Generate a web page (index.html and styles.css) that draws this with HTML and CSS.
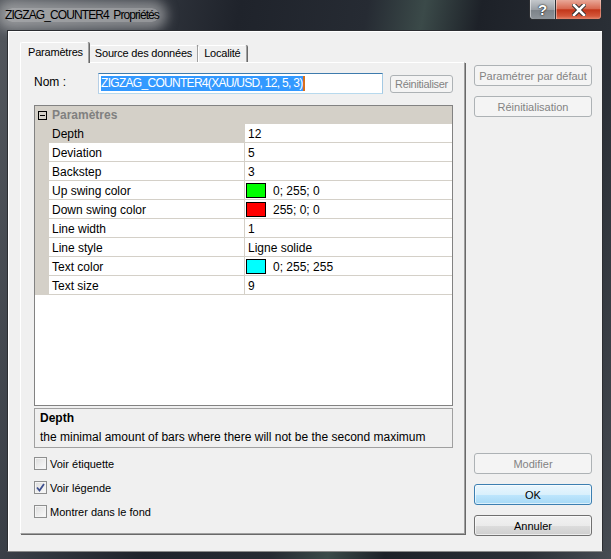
FILE: index.html
```html
<!DOCTYPE html>
<html lang="fr">
<head>
    <meta charset="UTF-8">
    <meta name="viewport" content="width=device-width, initial-scale=1.0">
    <title>ZIGZAG_COUNTER4 Propriétés</title>
    <link rel="stylesheet" href="styles.css">
</head>
<body>

    <div class="window">
        <div class="titlebar">
            <span class="title">ZIGZAG_COUNTER4 Propriétés</span>
            <div class="caption-buttons">
                <span class="cap help">?</span>
                <span class="cap close">
                    <svg width="14" height="12" viewBox="0 0 14 12">
                        <path d="M2 1 L12 11 M12 1 L2 11" stroke="#2a2a2a" stroke-width="4.5" stroke-linecap="square"/>
                        <path d="M2 1 L12 11 M12 1 L2 11" stroke="#fff" stroke-width="2.6" stroke-linecap="square"/>
                    </svg>
                </span>
            </div>
        </div>

        <div class="client">
            <div class="left">
                <div class="tabs">
                    <span class="tab active">Paramètres</span>
                    <span class="tab">Source des données</span>
                    <span class="tab">Localité</span>
                </div>

                <div class="panel">
                    <div class="name-row">
                        <label class="name-label">Nom :</label>
                        <div class="textbox"><span class="selected-text">ZIGZAG_COUNTER4(XAU/USD, 12, 5, 3)</span><span class="caret"></span></div>
                        <button class="btn small" disabled>Réinitialiser</button>
                    </div>

                    <div class="grid">
                        <div class="category"><span class="minus"></span>Paramètres</div>
                        <div class="row selected"><div class="gutter"></div><div class="name">Depth</div><div class="value">12</div></div>
                        <div class="row"><div class="gutter"></div><div class="name">Deviation</div><div class="value">5</div></div>
                        <div class="row"><div class="gutter"></div><div class="name">Backstep</div><div class="value">3</div></div>
                        <div class="row"><div class="gutter"></div><div class="name">Up swing color</div><div class="value"><span class="swatch" style="background:#00ff00"></span>0; 255; 0</div></div>
                        <div class="row"><div class="gutter"></div><div class="name">Down swing color</div><div class="value"><span class="swatch" style="background:#ff0000"></span>255; 0; 0</div></div>
                        <div class="row"><div class="gutter"></div><div class="name">Line width</div><div class="value">1</div></div>
                        <div class="row"><div class="gutter"></div><div class="name">Line style</div><div class="value">Ligne solide</div></div>
                        <div class="row"><div class="gutter"></div><div class="name">Text color</div><div class="value"><span class="swatch" style="background:#00ffff"></span>0; 255; 255</div></div>
                        <div class="row"><div class="gutter"></div><div class="name">Text size</div><div class="value">9</div></div>
                    </div>

                    <div class="desc">
                        <div class="desc-title">Depth</div>
                        <div>the minimal amount of bars where there will not be the second maximum</div>
                    </div>

                    <div class="checks">
                        <div class="check"><span class="box"></span>Voir étiquette</div>
                        <div class="check"><span class="box checked">
                            <svg width="9" height="9" viewBox="0 0 9 9"><path d="M1 4.5 L3.5 7.5 L8 1" fill="none" stroke="#3d4f8f" stroke-width="1.8"/></svg>
                        </span>Voir légende</div>
                        <div class="check"><span class="box"></span>Montrer dans le fond</div>
                    </div>
                </div>
            </div>

            <div class="right">
                <div class="right-top">
                    <button class="btn" disabled>Paramétrer par défaut</button>
                    <button class="btn" disabled>Réinitialisation</button>
                </div>
                <div class="right-bottom">
                    <button class="btn" disabled>Modifier</button>
                    <button class="btn default">OK</button>
                    <button class="btn normal">Annuler</button>
                </div>
            </div>
        </div>
    </div>

</body>
</html>
```

FILE: styles.css
```css
body { margin: 0; font-family: "Liberation Sans", Arial, sans-serif; font-size: 11px; color: #000; }

/* window frame */
.window {
    width: 611px; height: 559px; box-sizing: border-box; display: flex; flex-direction: column;
    background: linear-gradient(100deg, #54585e 0%, #3a3f47 14%, #1f232b 34%, #262b33 52%, #3b4a49 60%, #1d2128 68%, #2b3037 88%, #474c53 100%);
}
.titlebar { height: 30px; display: flex; align-items: flex-start; flex-shrink: 0; }
.title {
    margin: 8px 0 0 5px; font-size: 12px; line-height: 14px; letter-spacing: -0.9px; word-spacing: 2px;
    background: rgba(215, 215, 215, 0.6); box-shadow: 0 0 12px 8px rgba(215, 215, 215, 0.5); border-radius: 8px;
}
.caption-buttons { margin-left: auto; margin-right: 9px; display: flex; }
.cap {
    height: 20px; box-sizing: border-box; display: flex; align-items: center; justify-content: center;
    border: 1px solid #2d2f33; border-top: none;
}
.help {
    width: 26px; border-radius: 0 0 0 4px; border-right: none;
    background: linear-gradient(#c4c8cc, #9ba0a6 50%, #7c8288 51%, #8d9399);
    color: #fff; font: bold 15px "Liberation Sans", sans-serif; text-shadow: 0 0 2px #222, 0 0 1px #000;
    box-shadow: inset 1px 0 rgba(255,255,255,0.5), inset -1px 0 rgba(255,255,255,0.3);
}
.close {
    width: 47px; border-radius: 0 0 4px 0;
    background: linear-gradient(#e9a898, #d86a52 45%, #c2361a 52%, #d4573a 85%, #e3866c);
    box-shadow: inset 1px 0 rgba(255,255,255,0.4), inset -1px 0 rgba(255,255,255,0.3);
}

/* client area */
.client {
    margin: 0 8px 7px 7px; height: 522px; box-sizing: border-box; display: flex; gap: 9px;
    border: 1px solid #2b2d31; border-bottom-color: #8a8a8a; background: #f0f0f0; padding: 11px 10px 17px 12px;
    box-shadow: inset 1px 1px #fff;
}
.left { width: 445px; display: flex; flex-direction: column; }

.tabs { display: flex; height: 20px; align-items: flex-end; }
.tab {
    height: 17px; box-sizing: border-box; padding: 0 5px; line-height: 15px; background: #f0f0f0;
    border: 1px solid #fff; border-bottom: none; border-right-color: #a0a0a0;
    box-shadow: 1px 0 #696969; border-radius: 2px 2px 0 0; letter-spacing: -0.2px;
}
.tab.active { height: 21px; margin-bottom: -1px; position: relative; z-index: 1; padding: 0 5px 0 7px; line-height: 19px; }

.panel {
    flex: 1; box-sizing: border-box; border: 1px solid #fff; border-right-color: #a0a0a0; border-bottom-color: #a0a0a0;
    box-shadow: 1px 1px #696969; padding: 10px 11px 0 13px; display: flex; flex-direction: column;
}

.name-row { display: flex; align-items: center; height: 21px; }
.name-label { width: 64px; font-size: 12px; margin-top: -4px; }
.textbox {
    width: 285px; height: 21px; box-sizing: border-box; background: #fff; display: flex; align-items: center; padding-left: 2px;
    border: 1px solid; border-color: #3d7bad #a4c9e3 #b7d9ed #b5cfe7; font-size: 12px; letter-spacing: -0.7px;
}
.selected-text { background: #3399ff; color: #fff; line-height: 15px; }
.caret { width: 2px; height: 15px; background: #d9701c; }

.btn {
    width: 118px; height: 21px; box-sizing: border-box; border: 1px solid #adb2b5; border-radius: 3px;
    background: #f4f4f4; color: #838383; font: 11px "Liberation Sans", Arial, sans-serif; padding: 0;
}
.btn.small { width: 63px; height: 18px; margin-left: 7px; letter-spacing: -0.3px; }
.btn.default {
    border-color: #3c7fb1; color: #000;
    background: linear-gradient(#eaf6fd, #d9f0fc 50%, #bee6fd 51%, #a7d9f5);
    box-shadow: inset 0 0 0 1px rgba(255,255,255,0.6);
}
.btn.normal {
    border-color: #707070; color: #000;
    background: linear-gradient(#f2f2f2, #ebebeb 50%, #dddddd 51%, #cfcfcf);
    box-shadow: inset 0 0 0 1px rgba(255,255,255,0.6);
}

/* property grid */
.grid { margin-top: 11px; height: 301px; box-sizing: border-box; border: 1px solid #828282; background: #fff; font-size: 12px; }
.category { height: 18px; display: flex; align-items: center; background: #d4d0c8; color: #808080; font-weight: bold; }
.minus { width: 9px; height: 9px; box-sizing: border-box; border: 1px solid #000; margin: 0 5px 0 3px; position: relative; }
.minus::after { content: ""; position: absolute; left: 1px; right: 1px; top: 3px; height: 1px; background: #000; }
.row { display: flex; height: 19px; }
.gutter { width: 14px; background: #d4d0c8; }
.name, .value { box-sizing: border-box; border-bottom: 1px solid #d4d0c8; line-height: 18px; display: flex; align-items: center; padding-top: 1px; }
.name { width: 196px; padding-left: 3px; border-right: 1px solid #d4d0c8; }
.value { flex: 1; padding-left: 3px; }
.row.selected .name { background: #d4d0c8; }
.swatch { width: 20px; height: 15px; box-sizing: border-box; border: 1px solid #000; margin: -1px 7px 0 -2px; }

.desc { margin-top: 2px; height: 40px; box-sizing: border-box; border: 1px solid #a0a0a0; padding: 0 5px; font-size: 12px; line-height: 19px; }
.desc-title { font-weight: bold; }

.checks { margin-top: 9px; display: flex; flex-direction: column; gap: 11px; }
.check { display: flex; align-items: center; height: 13px; }
.box {
    width: 13px; height: 13px; box-sizing: border-box; border: 1px solid #8e8f8f; margin-right: 3px;
    background: linear-gradient(135deg, #dcdcdc, #fbfbfb); box-shadow: inset 0 0 0 1px #f4f4f4;
    display: flex; align-items: center; justify-content: center;
}

/* right column */
.right { width: 118px; display: flex; flex-direction: column; justify-content: space-between; }
.right-top { margin-top: 23px; display: flex; flex-direction: column; gap: 10px; }
.right-bottom { display: flex; flex-direction: column; gap: 10px; margin-bottom: -2px; }
```
